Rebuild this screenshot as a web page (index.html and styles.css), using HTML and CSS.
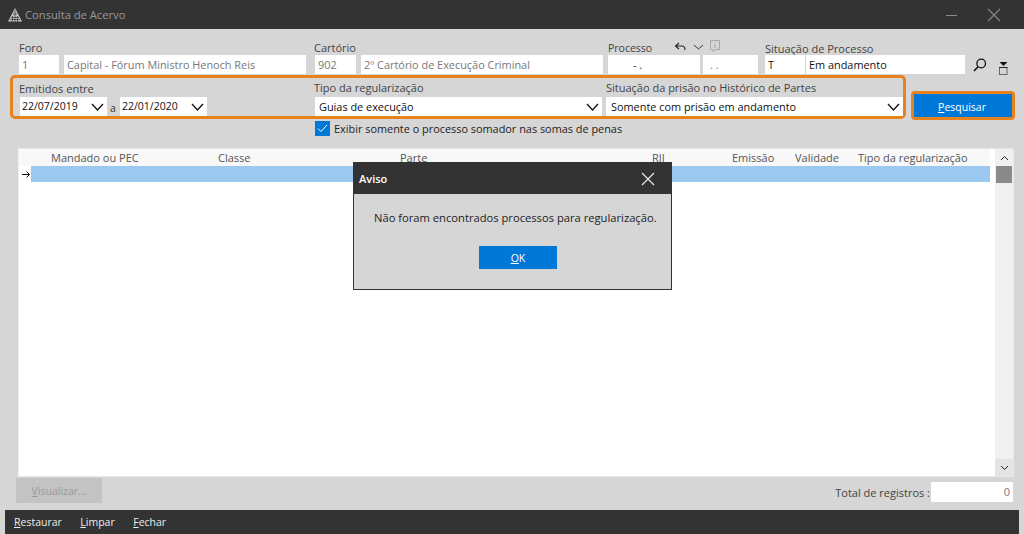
FILE: index.html
```html
<!DOCTYPE html>
<html lang="pt">
<head>
<meta charset="utf-8">
<title>Consulta de Acervo</title>
<link rel="stylesheet" href="styles.css">
</head>
<body>
<div class="app">
  <header class="titlebar">
    <svg class="logo" width="14" height="14" viewBox="0 0 14 14"><path d="M7 0 L14 13.500 H0 Z" fill="#c4c4c4"/><path d="M3 9.500H11M5 6H9M2 11.500H12M7 2V13.500M4.500 8V13.500M9.500 8V13.500" stroke="#333" stroke-width=".7" fill="none"/></svg>
    <span class="app-title">Consulta de Acervo</span>
    <svg class="min" width="12" height="12" viewBox="0 0 12 12"><path d="M0 6.500H11" stroke="#8a8a8a"/></svg>
    <svg class="close" width="14" height="14" viewBox="0 0 14 14"><path d="M1 1L13 13M13 1L1 13" stroke="#8a8a8a" stroke-width="1.100"/></svg>
  </header>

  <section class="row-one">
    <div class="field f-foro">
      <label>Foro</label>
      <div class="pair"><span class="input dim w-40">1</span><span class="input dim w-242">Capital - Fórum Ministro Henoch Reis</span></div>
    </div>
    <div class="field f-cart">
      <label class="shift">Cartório</label>
      <div class="pair"><span class="input dim w-41">902</span><span class="input dim w-242">2º Cartório de Execução Criminal</span></div>
    </div>
    <div class="field f-proc">
      <div class="proc-label">
        <label>Processo</label>
        <svg class="undo" width="12" height="10" viewBox="0 0 12 10"><path d="M5 1L1.500 4L5 7M2 4H8C10 4 11 5 11 8" fill="none" stroke="#222" stroke-width="1.100"/></svg>
        <svg class="chev" width="11" height="6" viewBox="0 0 11 6"><path d="M1 1L5.500 5L10 1" fill="none" stroke="#333"/></svg>
        <svg class="info" width="10" height="12" viewBox="0 0 10 12"><path d="M.5 .5H9.500V9.500H6L3 11.500V9.500H.5Z" fill="none" stroke="#a8a8a8"/><path d="M5 2V3M5 4V8" stroke="#a8a8a8"/></svg>
      </div>
      <div class="pair proc-pair"><span class="input mask-a">-&nbsp;.</span><span class="input dim mask-b">.&nbsp;.</span></div>
    </div>
    <div class="field f-sit">
      <label class="sit-label">Situação de Processo</label>
      <div class="pair tight"><span class="input w-40">T</span><span class="input w-159">Em andamento</span>
        <svg class="lens" width="14" height="14" viewBox="0 0 14 14"><circle cx="8.200" cy="5.500" r="4.300" fill="none" stroke="#111" stroke-width="1.300"/><path d="M5 8.800L1 13" stroke="#111" stroke-width="1.600"/></svg>
        <svg class="filter" width="9" height="13" viewBox="0 0 9 13"><path d="M.5 0H8.500L4.500 4Z" fill="#111"/><rect x=".5" y="5.500" width="7.500" height="7" fill="none" stroke="#666"/><path d="M0 5.500H8.500" stroke="#222"/></svg>
      </div>
    </div>
  </section>

  <section class="row-two">
    <div class="highlight">
      <div class="field f-dates">
        <label>Emitidos entre</label>
        <div class="dates">
          <span class="select small w-87">22/07/2019<svg class="drop" width="13" height="8" viewBox="0 0 13 8"><path d="M1 1L6.500 7L12 1" fill="none" stroke="#111" stroke-width="1.300"/></svg></span>
          <span class="a">a</span>
          <span class="select small w-87">22/01/2020<svg class="drop" width="13" height="8" viewBox="0 0 13 8"><path d="M1 1L6.500 7L12 1" fill="none" stroke="#111" stroke-width="1.300"/></svg></span>
        </div>
      </div>
      <div class="field f-tipo">
        <label class="shift up">Tipo da regularização</label>
        <span class="select w-287 pad-4">Guias de execução<svg class="drop" width="13" height="8" viewBox="0 0 13 8"><path d="M1 1L6.500 7L12 1" fill="none" stroke="#111" stroke-width="1.300"/></svg></span>
      </div>
      <div class="field f-prisao">
        <label class="up">Situação da prisão no Histórico de Partes</label>
        <span class="select w-297 pad-5">Somente com prisão em andamento<svg class="drop" width="13" height="8" viewBox="0 0 13 8"><path d="M1 1L6.500 7L12 1" fill="none" stroke="#111" stroke-width="1.300"/></svg></span>
      </div>
    </div>
    <div class="search-ring"><button class="primary search-btn"><u>P</u>esquisar</button></div>
  </section>

  <section class="row-three">
    <span class="checkbox"><svg width="15" height="15" viewBox="0 0 15 15"><path d="M3 7.500L6 10.500L12 4" fill="none" stroke="#fff"/></svg></span>
    <span class="check-text">Exibir somente o processo somador nas somas de penas</span>
  </section>

  <section class="grid-wrap">
    <div class="grid-main">
      <div class="grid-head">
        <span class="col c1">Mandado ou PEC</span>
        <span class="col c2">Classe</span>
        <span class="col c3">Parte</span>
        <span class="col c4">RJI</span>
        <span class="col c5">Emissão</span>
        <span class="col c6">Validade</span>
        <span class="col c7">Tipo da regularização</span>
      </div>
      <div class="grid-row">
        <svg class="row-arrow" width="9" height="9" viewBox="0 0 9 9"><path d="M0 4.500H7.500M4.500 1.500L7.500 4.500L4.500 7.500" fill="none" stroke="#111"/></svg>
        <span class="selected"></span>
      </div>
    </div>
    <div class="scrollbar">
      <svg class="sb-up" width="9" height="6" viewBox="0 0 9 6"><path d="M1 5L4.500 1.500L8 5" fill="none" stroke="#222"/></svg>
      <span class="thumb"></span>
      <span class="sb-track"></span>
      <span class="sb-btn"><svg width="9" height="6" viewBox="0 0 9 6"><path d="M1 1L4.500 4.500L8 1" fill="none" stroke="#222"/></svg></span>
    </div>
  </section>

  <section class="row-bottom">
    <button class="disabled"><u>V</u>isualizar...</button>
    <span class="total-label">Total de registros :</span>
    <span class="input total">0</span>
  </section>

  <footer class="footer">
    <span><u>R</u>estaurar</span>
    <span><u>L</u>impar</span>
    <span><u>F</u>echar</span>
  </footer>

  <div class="dialog">
    <div class="dialog-title">
      <span>Aviso</span>
      <svg width="14" height="14" viewBox="0 0 14 14"><path d="M1 1L13 13M13 1L1 13" stroke="#eee" stroke-width="1.100"/></svg>
    </div>
    <div class="dialog-body">
      <p>Não foram encontrados processos para regularização.</p>
      <button class="primary ok"><u>O</u>K</button>
    </div>
  </div>
</div>
</body>
</html>
```

FILE: styles.css
```css
* { box-sizing: border-box; }
html, body { margin: 0; height: 100%; }
body { font-family: "Open Sans", "Noto Sans", sans-serif; font-size: 11px; color: #333; background: #d6d6d6; overflow: hidden; }
.app { position: relative; width: 1024px; height: 534px; display: flex; flex-direction: column; background: #d6d6d6; }

.titlebar { height: 29px; background: #333; display: flex; align-items: center; padding: 0 23px 0 8px; color: #999; flex: none; }
.logo { margin-right: 3px; }
.app-title { flex: 1; font-size: 11.200px; }
.min { margin-right: 29px; }

label { display: block; height: 13px; line-height: 12px; color: #444; }
.row-one { display: flex; padding: 13px 0 0 19px; height: 46px; flex: none; }
.field { display: flex; flex-direction: column; }
.pair { display: flex; gap: 5px; }
.pair.tight { gap: 1px; align-items: flex-start; }
.input { display: block; height: 19px; background: #fff; line-height: 20px; padding: 0 3px; color: #111; white-space: nowrap; overflow: hidden; font-size: 10.900px; }
.input.dim { color: #777; }
.w-40 { width: 40px; } .w-41 { width: 41px; } .w-242 { width: 242px; } .w-159 { width: 159px; }
.f-foro { width: 296px; }
.f-cart { width: 293px; }
.f-proc { width: 157px; }
.shift { margin-left: -1px; }
.proc-label label { font-size: 10.500px; }
.proc-pair { gap: 3px; }
.mask-a { width: 92px; padding-left: 25px; color: #333; }
.mask-b { width: 55px; padding-left: 7px; }
.proc-label { display: flex; align-items: center; height: 13px; }
.undo { margin-left: 22px; margin-top: -4px; }
.chev { margin-left: 7px; margin-top: -4px; }
.info { margin-left: 6px; margin-top: -6px; }
.sit-label { line-height: 13px; }
.lens { margin-left: 7px; margin-top: 3px; }
.filter { margin-left: 11px; margin-top: 7px; }

.row-two { display: flex; align-items: flex-start; padding-left: 10px; height: 46px; flex: none; }
.highlight { display: flex; width: 896px; height: 44px; border: 3px solid #e8821e; border-radius: 5px; padding: 3px 0 0 6px; }
.highlight label { height: 16px; line-height: 16px; }
.highlight label.up { line-height: 14px; }
.f-dates { width: 296px; }
.f-tipo { width: 291px; }
.dates { display: flex; align-items: flex-start; margin-left: 1px; }
.a { width: 13px; padding: 2px 1px 0 0; text-align: center; font-size: 10.500px; line-height: 19px; }
.select { display: flex; align-items: center; justify-content: space-between; height: 19px; background: #fff; color: #111; padding: 0 3px 1px 2px; white-space: nowrap; font-size: 10.900px; }
.select.small { font-size: 10.500px; }
.select.pad-4 { padding-left: 4px; }
.select.pad-5 { padding-left: 5px; }
.w-87 { width: 87px; } .w-287 { width: 287px; } .w-297 { width: 297px; }
.drop { flex: none; margin-top: 1px; }

.search-ring { margin: 16px 0 0 5px; width: 104px; height: 29px; border: 2px solid #e8821e; border-radius: 4px; padding: 1px; background: #e8821e; display: flex; }
button { font: inherit; font-size: 10.500px; border: 0; padding: 0; margin: 0; }
.primary { background: #0078d7; color: #fff; }
.search-btn { flex: 1; padding: 2px 2px 0 0; }

.row-three { display: flex; align-items: center; padding-left: 315px; height: 15px; gap: 4px; flex: none; color: #222; font-size: 10.900px; }
.checkbox { width: 15px; height: 15px; background: #0078d7; display: block; }
.checkbox svg { display: block; }

.grid-wrap { margin: 12px 10px 0 18px; height: 329px; display: flex; background: #fff; border: 1px solid #e6e6e6; border-left-color: #f0f0f0; flex: none; }
.grid-main { flex: 1; display: flex; flex-direction: column; }
.grid-head { height: 17px; background: #f8f8f8; position: relative; margin-right: 5px; line-height: 18px; color: #555; }
.col { position: absolute; top: 0; white-space: nowrap; }
.c1 { left: 32px; } .c2 { left: 199px; } .c3 { left: 381px; } .c4 { left: 633px; } .c5 { left: 713px; } .c6 { left: 776px; } .c7 { left: 839px; }
.grid-row { display: flex; align-items: center; height: 16px; margin-right: 5px; }
.row-arrow { margin: 0 0 0 3px; }
.selected { flex: 1; height: 16px; background: #9ac8ee; }
.scrollbar { width: 18px; background: #f0f0f0; display: flex; flex-direction: column; align-items: center; }
.sb-up { margin: 6px 0 5px; flex: none; }
.thumb { width: 16px; height: 17px; background: #8a8a8a; flex: none; }
.sb-track { flex: 1; }
.sb-btn { width: 18px; height: 17px; background: #e4e4e4; display: flex; align-items: center; justify-content: center; }

.row-bottom { display: flex; align-items: flex-start; padding: 1px 11px 0 16px; height: 33px; flex: none; }
.disabled { width: 86px; height: 25px; background: #c3c3c3; color: #999; }
.total-label { margin-left: auto; margin-top: 5px; line-height: 19px; color: #444; margin-right: 1px; }
.total { width: 82px; height: 20px; margin-top: 4px; text-align: right; color: #777; line-height: 20px; }

.footer { margin: 0 5px; height: 24px; background: #333; color: #eee; display: flex; align-items: center; gap: 18.500px; padding-left: 9px; flex: none; font-size: 10.500px; }

.dialog { position: absolute; left: 353px; top: 162px; width: 319px; height: 128px; border: 1px solid #333; background: #d6d6d6; display: flex; flex-direction: column; }
.dialog-title { height: 31px; background: #333; color: #fff; font-weight: 600; display: flex; align-items: center; justify-content: space-between; padding: 0 16px 0 5px; flex: none; }
.dialog-body { flex: 1; display: flex; flex-direction: column; align-items: center; }
.dialog-body p { margin: 16px 0 0 20px; align-self: flex-start; color: #222; line-height: 16px; white-space: nowrap; font-size: 11.200px; }
.ok { width: 78px; height: 23px; margin-top: 20px; margin-left: 11px; }
```
